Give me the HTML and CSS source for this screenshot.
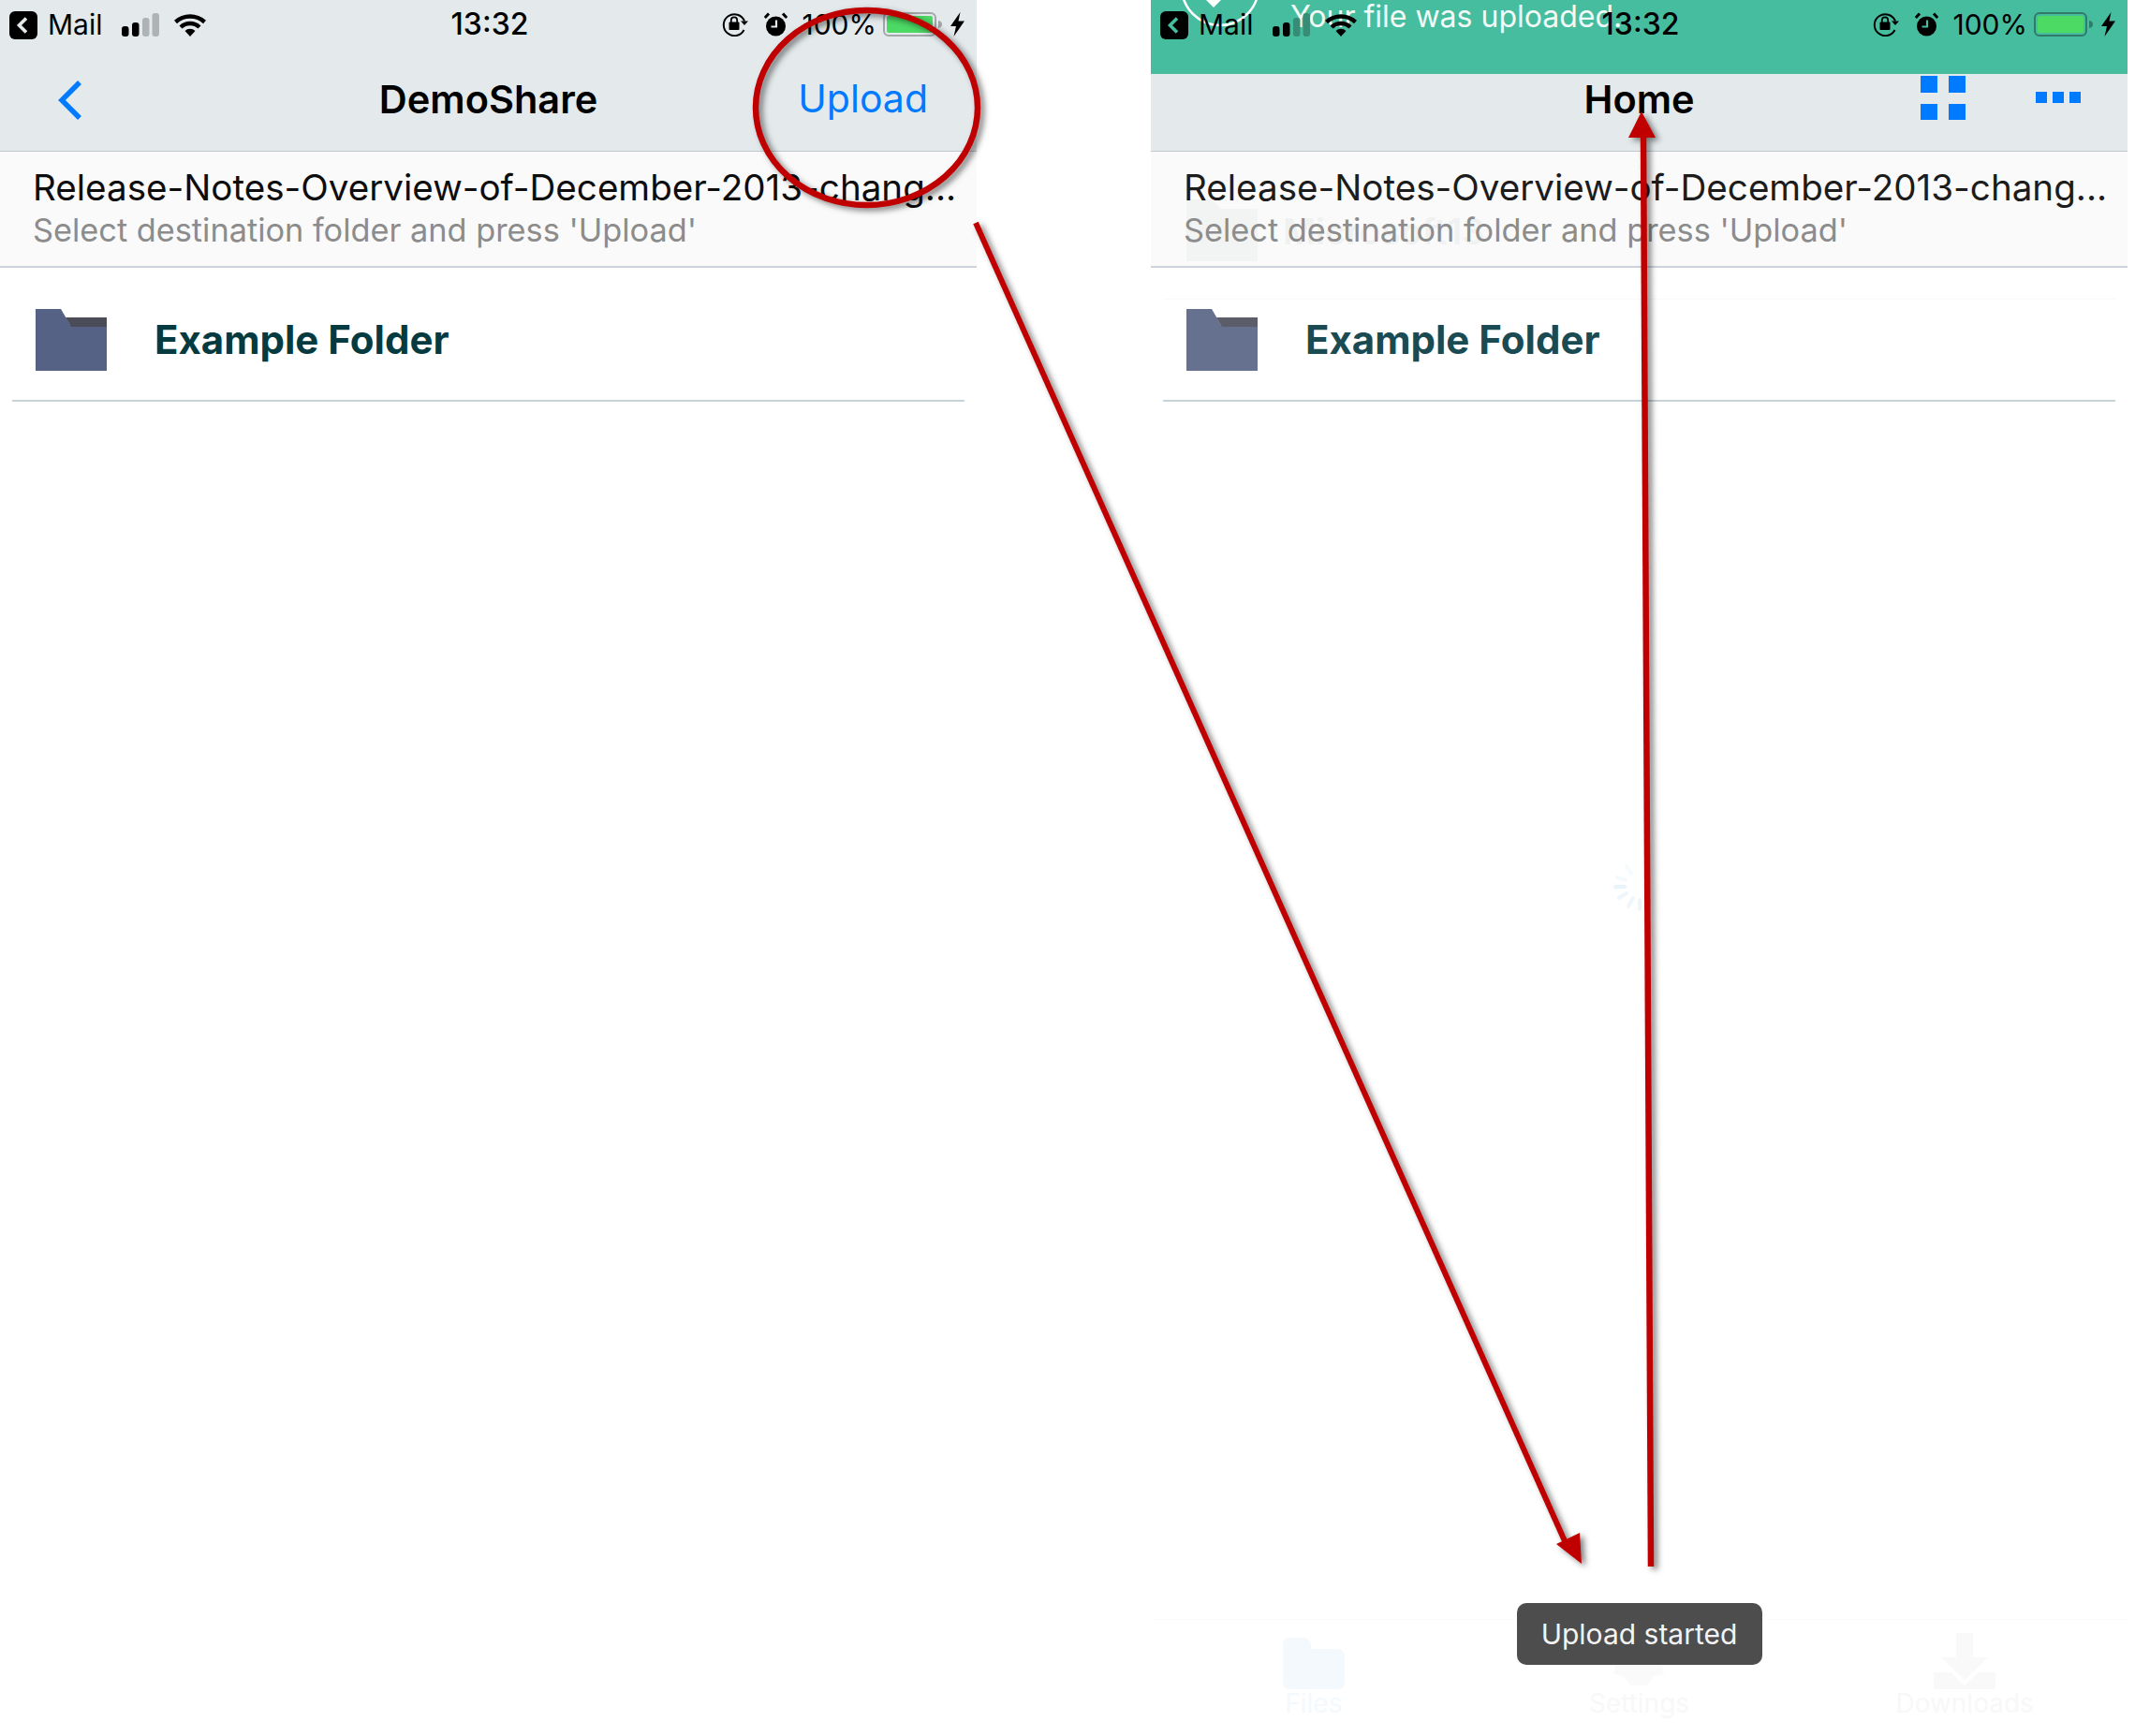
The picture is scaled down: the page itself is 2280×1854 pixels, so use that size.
FILE: index.html
```html
<!DOCTYPE html>
<html lang="en">
<head>
<meta charset="utf-8">
<title>DemoShare upload</title>
<link rel="stylesheet" href="styles.css">
</head>
<body>
<main class="canvas">
  <section class="phone">
    <header class="status">
      <div class="status-left">
        <svg class="ico-back" viewBox="0 0 30 30"><rect width="30" height="30" rx="6" fill="#000"/><path d="M18 7.500 10.500 15 18 22.500" fill="none" stroke="#e4eaec" stroke-width="3.600"/></svg>
        <span class="mail">Mail</span>
        <svg class="ico-signal" viewBox="0 0 40 25"><rect x="0" y="14" width="7.500" height="11" rx="3" fill="#000"/><rect x="11" y="10" width="7.500" height="15" rx="3" fill="#000"/><rect x="22" y="5" width="7.500" height="20" rx="3" fill="#aeb3b5"/><rect x="32.500" y="0" width="7.500" height="25" rx="3" fill="#aeb3b5"/></svg>
        <svg class="ico-wifi" viewBox="0 0 34 25"><path d="M1.500 9.500A23 23 0 0 1 32.500 9.500M7 15A14.500 14.500 0 0 1 27 15" fill="none" stroke="#000" stroke-width="4.400"/><path d="M17 25 11.500 19A8 8 0 0 1 22.500 19Z" fill="#000"/></svg>
      </div>
      <span class="time">13:32</span>
      <div class="status-right">
        <svg class="ico-lock" viewBox="0 0 28 26"><path d="M23.500 19A11.500 11.500 0 1 1 24 9.500" fill="none" stroke="#000" stroke-width="2"/><path d="M20 9.500h8L24 14Z" fill="#000"/><rect x="7.500" y="10.500" width="11" height="8.500" rx="1" fill="#000"/><path d="M9.800 11V8.500a3.200 3.200 0 0 1 6.400 0V11" fill="none" stroke="#000" stroke-width="1.800"/></svg>
        <svg class="ico-alarm" viewBox="0 0 25 26"><circle cx="12.500" cy="15" r="10.500" fill="#000"/><path d="M0.800 6 5 1.500M24.200 6 20 1.500" stroke="#000" stroke-width="3"/><path d="M13 8.500V15.500H7.500" fill="none" stroke="#e4eaec" stroke-width="2.200"/></svg>
        <span class="pct">100%</span>
        <svg class="ico-batt" viewBox="0 0 64 26"><rect x="1" y="1" width="55" height="24" rx="5" fill="none" stroke="#a2a7a9" stroke-width="2"/><rect x="4" y="4" width="49" height="18" rx="2" fill="#4cd964"/><path d="M59 9c3 .5 4 2 4 4s-1 3.500-4 4Z" fill="#a2a7a9"/></svg>
        <svg class="ico-bolt" viewBox="0 0 15 26"><path d="M10.500 0 0 15H6L3.500 26 15 9.500H8.500Z" fill="#000"/></svg>
      </div>
    </header>
    <nav class="nav">
      <svg class="ico-chev" viewBox="0 0 27 44"><path d="M24 3 5 22 24 41" fill="none" stroke="#007aff" stroke-width="5.500"/></svg>
      <h1 class="title">DemoShare</h1>
      <span class="upload">Upload</span>
    </nav>
    <div class="sub">
      <p class="file">Release-Notes-Overview-of-December-2013-chang...</p>
      <p class="hint">Select destination folder and press 'Upload'</p>
    </div>
    <div class="row">
      <svg class="ico-folder" viewBox="0 0 76 66"><path d="M0 0H27L37 17H76V66H0Z" fill="#566285"/><path d="M32 9H76V19H38Z" fill="#4a4c58"/></svg>
      <span class="folder-name">Example Folder</span>
    </div>
  </section>

  <section class="phone phone-done">
    <div class="banner">
      <svg class="ico-check" viewBox="0 0 90 30"><circle cx="45" cy="-14" r="41" fill="none" stroke="#fff" stroke-width="2.500"/><path d="M30 0H46L38 8Z" fill="#fff"/></svg>
      <span class="banner-text">Your file was uploaded.</span>
    </div>
    <header class="status">
      <div class="status-left">
        <svg class="ico-back" viewBox="0 0 30 30"><rect width="30" height="30" rx="6" fill="#000"/><path d="M18 7.500 10.500 15 18 22.500" fill="none" stroke="#46bd9f" stroke-width="3.600"/></svg>
        <span class="mail">Mail</span>
        <svg class="ico-signal" viewBox="0 0 40 25"><rect x="0" y="14" width="7.500" height="11" rx="3" fill="#000"/><rect x="11" y="10" width="7.500" height="15" rx="3" fill="#000"/><rect x="22" y="5" width="7.500" height="20" rx="3" fill="#378c76"/><rect x="32.500" y="0" width="7.500" height="25" rx="3" fill="#378c76"/></svg>
        <svg class="ico-wifi" viewBox="0 0 34 25"><path d="M1.500 9.500A23 23 0 0 1 32.500 9.500M7 15A14.500 14.500 0 0 1 27 15" fill="none" stroke="#000" stroke-width="4.400"/><path d="M17 25 11.500 19A8 8 0 0 1 22.500 19Z" fill="#000"/></svg>
      </div>
      <span class="time">13:32</span>
      <div class="status-right">
        <svg class="ico-lock" viewBox="0 0 28 26"><path d="M23.500 19A11.500 11.500 0 1 1 24 9.500" fill="none" stroke="#000" stroke-width="2"/><path d="M20 9.500h8L24 14Z" fill="#000"/><rect x="7.500" y="10.500" width="11" height="8.500" rx="1" fill="#000"/><path d="M9.800 11V8.500a3.200 3.200 0 0 1 6.400 0V11" fill="none" stroke="#000" stroke-width="1.800"/></svg>
        <svg class="ico-alarm" viewBox="0 0 25 26"><circle cx="12.500" cy="15" r="10.500" fill="#000"/><path d="M0.800 6 5 1.500M24.200 6 20 1.500" stroke="#000" stroke-width="3"/><path d="M13 8.500V15.500H7.500" fill="none" stroke="#46bd9f" stroke-width="2.200"/></svg>
        <span class="pct">100%</span>
        <svg class="ico-batt" viewBox="0 0 64 26"><rect x="1" y="1" width="55" height="24" rx="5" fill="none" stroke="#2f7b68" stroke-width="2"/><rect x="4" y="4" width="49" height="18" rx="2" fill="#4cd964"/><path d="M59 9c3 .5 4 2 4 4s-1 3.500-4 4Z" fill="#2f7b68"/></svg>
        <svg class="ico-bolt" viewBox="0 0 15 26"><path d="M10.500 0 0 15H6L3.500 26 15 9.500H8.500Z" fill="#000"/></svg>
      </div>
    </header>
    <nav class="nav nav-home">
      <span></span>
      <h1 class="title">Home</h1>
      <div class="nav-actions">
        <svg class="ico-grid" viewBox="0 0 48 47"><rect width="18" height="18" fill="#007aff"/><rect x="30" width="18" height="18" fill="#007aff"/><rect y="30" width="18" height="17" fill="#007aff"/><rect x="30" y="30" width="18" height="17" fill="#007aff"/></svg>
        <svg class="ico-dots" viewBox="0 0 48 12"><rect width="12" height="12" fill="#007aff"/><rect x="18" width="12" height="12" fill="#007aff"/><rect x="36" width="12" height="12" fill="#007aff"/></svg>
      </div>
    </nav>
    <div class="sub">
      <div class="ghost">
        <svg class="ico-folder" viewBox="0 0 76 66"><path d="M0 0H27L37 10H76V66H0Z" fill="#f2f3f3"/></svg>
        <span class="ghost-name">Microsoft13</span>
      </div>
      <p class="file">Release-Notes-Overview-of-December-2013-chang...</p>
      <p class="hint">Select destination folder and press 'Upload'</p>
    </div>
    <div class="row">
      <svg class="ico-folder" viewBox="0 0 76 66"><path d="M0 0H27L37 17H76V66H0Z" fill="#566285"/><path d="M32 9H76V19H38Z" fill="#4a4c58"/></svg>
      <span class="folder-name">Example Folder</span>
    </div>
    <svg class="spinner" viewBox="0 0 60 60"><g stroke="#f5fafd" stroke-width="4" stroke-linecap="round"><path d="M22 18 17 10M16 25 7 22"/><path d="M5 32H15" stroke="#e9f3fa"/><path d="M17 39 9 44M24 44 19 53M31 46V56" stroke="#eff6fb"/></g></svg>
    <div class="tabs">
      <div class="tab tab-files">
        <svg class="ico-tab" viewBox="0 0 66 60"><path d="M8 5H22Q30 5 30 14V17H58Q66 17 66 25V52Q66 60 58 60H8Q0 60 0 52V13Q0 5 8 5Z" fill="#f3f9fd"/></svg>
        <span>Files</span>
      </div>
      <div class="tab">
        <svg class="ico-tab" viewBox="0 0 66 60"><path d="M33 4 42 8 52 6 58 16 64 24 58 34 60 44 49 46 42 56H24L17 46 6 44 8 34 2 24 8 16 14 6 24 8Z" fill="#fafafa"/></svg>
        <span>Settings</span>
      </div>
      <div class="tab">
        <svg class="ico-tab" viewBox="0 0 66 60"><path d="M24 0H42V26H58L33 50 8 26H24Z" fill="#f9f9f9"/><path d="M0 42H18L33 56 48 42H66V60H0Z" fill="#f9f9f9"/></svg>
        <span>Downloads</span>
      </div>
    </div>
    <div class="toast">Upload started</div>
  </section>

  <svg class="marks" viewBox="0 0 2280 1854">
    <g class="mark-group">
      <ellipse cx="925.500" cy="115" rx="118.500" ry="104" fill="none" stroke="#c00000" stroke-width="6.500"/>
      <path d="M1042 238 1672 1648" fill="none" stroke="#c00000" stroke-width="6"/>
      <path d="M1689 1670 1662 1649 1687 1637Z" fill="#c00000"/>
      <path d="M1763 1673 1755 140" fill="none" stroke="#c00000" stroke-width="6.500"/>
      <path d="M1753 119 1739 147H1768Z" fill="#c00000"/>
    </g>
  </svg>
</main>
</body>
</html>
```

FILE: styles.css
```css
* { box-sizing: border-box; }
html, body { margin: 0; padding: 0; background: #fff; }
body { font-family: Inter, "Liberation Sans", sans-serif; color: #000; }
p, h1 { margin: 0; }

.canvas {
  position: relative;
  width: 2280px;
  height: 1854px;
  display: flex;
  gap: 186px;
  overflow: hidden;
}

.phone {
  position: relative;
  width: 1043px;
  height: 1854px;
  flex: none;
  display: flex;
  flex-direction: column;
}

/* status bar */
.status {
  position: relative;
  z-index: 2;
  height: 52px;
  flex: none;
  padding: 0 13px 0 10px;
  display: grid;
  grid-template-columns: 1fr auto 1fr;
  align-items: center;
  background: #e4eaec;
}
.phone-done .status { background: transparent; }
.status-left, .status-right { display: flex; align-items: center; }
.status-right { justify-content: flex-end; }
.ico-back { width: 30px; height: 30px; margin-top: 2px; }
.mail { margin-left: 11px; font-size: 30px; line-height: 36px; }
.ico-signal { width: 40px; height: 25px; margin-left: 21px; }
.ico-wifi { width: 34px; height: 25px; margin-left: 16px; }
.time { font-size: 32px; font-weight: 500; line-height: 36px; margin-left: 6px; }
.ico-lock { width: 28px; height: 26px; }
.ico-alarm { width: 25px; height: 26px; margin-left: 17px; }
.pct { font-size: 30px; line-height: 36px; margin-left: 15px; }
.ico-batt { width: 64px; height: 26px; margin-left: 7px; }
.ico-bolt { width: 15px; height: 26px; margin-left: 8px; }

/* green banner behind the status bar */
.banner {
  position: absolute;
  z-index: 1;
  top: 0;
  left: 0;
  right: 0;
  height: 79px;
  background: #46bd9f;
  display: flex;
  align-items: flex-start;
}
.ico-check { width: 90px; height: 30px; margin-left: 29px; flex: none; }
.banner-text {
  margin-left: 30px;
  font-size: 32px;
  line-height: 36px;
  color: #f2faf8;
}

/* navigation */
.nav {
  height: 110px;
  flex: none;
  padding: 0 0 0 61px;
  display: grid;
  grid-template-columns: 1fr auto 1fr;
  align-items: center;
  background: #e4eaec;
  border-bottom: 1px solid #c2c7cb;
}
.ico-chev { width: 27px; height: 44px; }
.title { font-size: 41.500px; font-weight: 600; line-height: 48px; margin-left: -61px; margin-bottom: 2px; }
.upload {
  justify-self: end;
  margin: 0 52px 3px 0;
  font-size: 41px;
  line-height: 48px;
  color: #007aff;
}
.nav-home { padding: 0 50px 0 61px; }
.nav-actions { display: flex; justify-content: flex-end; align-items: center; gap: 75px; margin-bottom: 5px; }
.nav-home .title { margin-left: -61px; margin-right: -50px; }
.ico-grid { width: 48px; height: 47px; }
.ico-dots { width: 48px; height: 12px; }

/* file summary */
.sub {
  position: relative;
  height: 124px;
  flex: none;
  padding: 16px 0 0 35px;
  background: #fafafa;
  border-bottom: 2px solid #ccd3da;
}
.file {
  position: relative;
  font-size: 38.600px;
  line-height: 44px;
  white-space: nowrap;
  color: #0d0d0d;
}
.hint {
  position: relative;
  margin-top: 2px;
  font-size: 34.300px;
  line-height: 44px;
  white-space: nowrap;
  color: #8c8c8c;
}
.phone-done .file { color: #1c1c1c; }
.ghost {
  position: absolute;
  top: 51px;
  left: 38px;
  display: flex;
  align-items: flex-start;
  gap: 27px;
}
.ghost .ico-folder { width: 76px; height: 66px; margin: 0; }
.ghost-name {
  font-size: 38px;
  font-weight: 600;
  line-height: 48px;
  color: #f0f1f1;
  margin-top: 10px;
}

/* folder row */
.row {
  position: relative;
  height: 143px;
  flex: none;
  margin: 0 13px;
  padding: 44px 0 0 25px;
  display: flex;
  align-items: flex-start;
  border-bottom: 2px solid #c7d2d9;
}
.ico-folder { width: 76px; height: 66px; flex: none; }
.folder-name {
  margin: 8px 0 0 51px;
  font-size: 42px;
  font-weight: 700;
  line-height: 50px;
  color: #053b40;
}
.phone-done .row .ico-folder { opacity: .9; }
.phone-done .folder-name { color: #1a4b52; }
.phone-done .row::before {
  content: "";
  position: absolute;
  top: 33px;
  left: 0;
  right: 0;
  height: 1px;
  background: #f8f9f9;
}

/* faint leftovers of the underlying screen */
.spinner {
  position: absolute;
  left: 491px;
  top: 915px;
  width: 60px;
  height: 60px;
}
.tabs {
  margin-top: auto;
  height: 125px;
  flex: none;
  padding-top: 14px;
  display: grid;
  grid-template-columns: repeat(3, 1fr);
  border-top: 1px solid #fbfbfb;
}
.tab {
  display: flex;
  flex-direction: column;
  align-items: center;
  font-size: 28px;
  line-height: 30px;
  color: #f8f8f8;
}
.tab-files { color: #f3f9fd; }
.ico-tab { width: 66px; height: 60px; }

/* toast */
.toast {
  position: absolute;
  left: 0;
  right: 0;
  bottom: 76px;
  margin: 0 auto;
  width: 262px;
  height: 66px;
  display: flex;
  align-items: center;
  justify-content: center;
  background: #4d4d4d;
  border-radius: 10px;
  font-size: 30px;
  color: #f4f4f4;
}

/* red annotation overlay */
.marks {
  position: absolute;
  z-index: 5;
  top: 0;
  left: 0;
  width: 2280px;
  height: 1854px;
  pointer-events: none;
}
.mark-group { filter: drop-shadow(4px 3px 3px rgba(0, 0, 0, .5)); }
```
